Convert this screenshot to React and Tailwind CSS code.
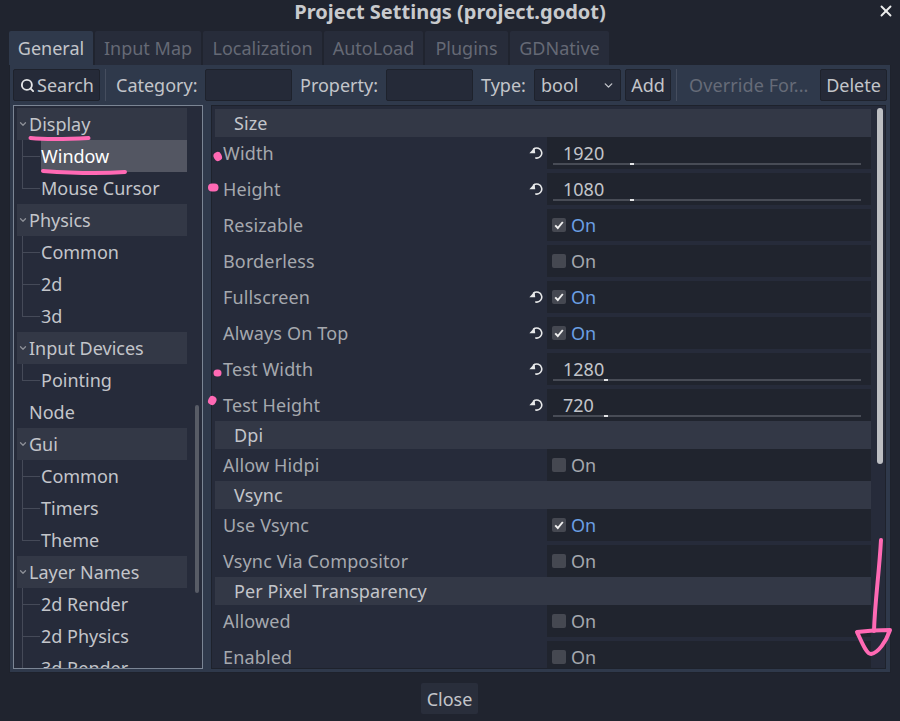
import { Search, ChevronDown, X } from 'lucide-react';

const TABS = ['Input Map', 'Localization', 'AutoLoad', 'Plugins', 'GDNative'];

const TREE = [
  { label: 'Display', head: true },
  { label: 'Window', sel: true },
  { label: 'Mouse Cursor', last: true },
  { label: 'Physics', head: true },
  { label: 'Common' },
  { label: '2d' },
  { label: '3d', last: true },
  { label: 'Input Devices', head: true },
  { label: 'Pointing', last: true },
  { label: 'Node', plain: true },
  { label: 'Gui', head: true },
  { label: 'Common' },
  { label: 'Timers' },
  { label: 'Theme', last: true },
  { label: 'Layer Names', head: true },
  { label: '2d Render' },
  { label: '2d Physics' },
  { label: '3d Render' },
];

const PROPS = [
  { section: 'Size' },
  { label: 'Width', value: '1920', grab: 77, reset: true },
  { label: 'Height', value: '1080', grab: 77, reset: true },
  { label: 'Resizable', on: true },
  { label: 'Borderless', on: false },
  { label: 'Fullscreen', on: true, reset: true },
  { label: 'Always On Top', on: true, reset: true },
  { label: 'Test Width', value: '1280', grab: 51, reset: true },
  { label: 'Test Height', value: '720', grab: 51, reset: true, noGap: true },
  { section: 'Dpi' },
  { label: 'Allow Hidpi', on: false, noGap: true },
  { section: 'Vsync' },
  { label: 'Use Vsync', on: true },
  { label: 'Vsync Via Compositor', on: false, noGap: true },
  { section: 'Per Pixel Transparency' },
  { label: 'Allowed', on: false },
  { label: 'Enabled', on: false },
];

function TreeRow({ item }) {
  if (item.head) {
    return (
      <div className="h-8 w-[170px] bg-[#333846] flex items-center text-[#c3c5ca] shrink-0">
        <ChevronDown size={10} strokeWidth={3} className="ml-[1px] mr-[1px] text-[#8d9098]" />
        <span>{item.label}</span>
      </div>
    );
  }
  if (item.plain) {
    return <div className="h-8 w-[170px] flex items-center pl-3 text-[#c3c5ca] shrink-0">{item.label}</div>;
  }
  return (
    <div className="relative h-8 w-[170px] flex shrink-0">
      <span className={'absolute left-[5px] top-0 w-px bg-[#454a58] ' + (item.last ? 'h-4' : 'h-8')} />
      <span className="absolute left-[5px] top-4 w-[18px] h-px bg-[#454a58]" />
      <div className={'ml-6 flex-1 flex items-center ' + (item.sel ? 'bg-[#535662] text-white' : 'text-[#c3c5ca]')}>
        {item.label}
      </div>
    </div>
  );
}

function ResetIcon() {
  return (
    <svg width="14" height="14" viewBox="0 0 14 14" fill="none" className="text-[#e8e9ea]">
      <path d="M4.6 3.2 A5 5 0 1 1 6.8 12" stroke="currentColor" strokeWidth="1.6" strokeLinecap="round" />
      <path d="M0.4 7.2 L6.2 7.2 L5.6 1.6 Z" fill="currentColor" />
    </svg>
  );
}

function Prop({ p }) {
  if (p.section) {
    return (
      <div className="h-7 w-[656px] bg-[#333846] flex items-center pl-[19px] text-[#c3c5ca] tracking-[0.1px] shrink-0">{p.section}</div>
    );
  }
  return (
    <div className={'flex h-8 shrink-0 ' + (p.noGap ? '' : 'mb-1')}>
      <div className="w-[332px] pl-2 pr-1 flex items-center justify-between text-[#a5a8ae] tracking-[0.15px]">
        <span>{p.label}</span>
        {p.reset && <ResetIcon />}
      </div>
      <div className="w-[324px] bg-[#20242e] relative flex items-center">
        {p.value ? (
          <>
            <span className="ml-4 text-[#c3c5ca]">{p.value}</span>
            <div className="absolute left-[6px] right-[10px] bottom-1 h-0.5 bg-[#484c56]" />
            <div className="absolute bottom-1 h-0.5 w-1 bg-[#e2e3e5]" style={{ left: p.grab + 6 }} />
          </>
        ) : (
          <>
            <span className="ml-[5px] w-[14px] h-[14px] rounded-[2px] bg-[#454851] flex items-center justify-center">
              {p.on && (
                <svg width="10" height="10" viewBox="0 0 10 10" fill="none">
                  <path d="M1.2 5.4 L3.8 8 L8.8 2" stroke="#f0f0f0" strokeWidth="1.9" />
                </svg>
              )}
            </span>
            <span className={'ml-[5px] ' + (p.on ? 'text-[#6b9fe4]' : 'text-[#a5a8ae]')}>On</span>
          </>
        )}
      </div>
    </div>
  );
}

function Btn({ className, children }) {
  return (
    <div className={'h-8 bg-[#252a38] border border-[#1e222c] rounded-[2px] flex items-center shrink-0 text-[#c3c5ca] ' + className}>
      {children}
    </div>
  );
}

export default function App() {
  return (
    <div className="relative w-[900px] h-[721px] bg-[#20242f] overflow-hidden text-[18px] leading-6" style={{ fontFamily: '"Noto Sans", sans-serif' }}>
      <div className="h-[31px] relative flex items-center justify-center pb-2 font-bold text-[20px] leading-5 text-[#c8cacd]">
        Project Settings (project.godot)
        <X size={18} strokeWidth={2.5} className="absolute right-[5px] top-[2px] text-[#eceded]" />
      </div>

      {/* tabs */}
      <div className="ml-[9px] flex gap-0.5 h-[34px]">
        <div className="w-[84px] bg-[#2f394b] rounded-t-[2px] flex items-center justify-center text-[#c3c5ca]">General</div>
        {TABS.map((t, i) => (
          <div key={t} className={'bg-[#272c3a] rounded-t-[2px] flex items-center justify-center text-[#656975] ' + ['w-[106px]', 'w-[119px]', 'w-[99px]', 'w-[83px]', 'w-[99px]'][i]}>
            {t}
          </div>
        ))}
      </div>

      <div className="mx-[9px] w-[882px] h-[608px] bg-[#2f394b] border border-[#1e222c] border-t-0 p-1 flex flex-col">
        {/* toolbar */}
        <div className="flex items-center h-8 -ml-px -mr-px">
          <Btn className="w-[87px] pl-[6px]">
            <Search size={15} strokeWidth={3} className="mr-[2px] text-[#e4e5e7]" />
            Search
          </Btn>
          <span className="w-px h-8 bg-[#454d5e] ml-[5px]" />
          <span className="ml-[10px] w-[89px] text-[#c3c5ca]">Category:</span>
          <Btn className="w-[87px]" />
          <span className="ml-2 w-[86px] text-[#c3c5ca]">Property:</span>
          <Btn className="w-[87px]" />
          <span className="ml-2 w-[53px] text-[#c3c5ca]">Type:</span>
          <Btn className="w-[87px] pl-[6px] justify-between pr-[5px]">
            bool
            <ChevronDown size={13} strokeWidth={2.5} className="text-[#c3c5ca]" />
          </Btn>
          <Btn className="ml-1 w-[46px] justify-center">Add</Btn>
          <span className="w-px h-8 bg-[#454d5e] ml-[5px]" />
          <span className="ml-[12px] w-[131px] text-[#666b78] tracking-[0.1px]">Override For...</span>
          <Btn className="w-[67px] justify-center">Delete</Btn>
        </div>

        <div className="flex mt-1 h-[564px] -ml-px">
          {/* tree */}
          <div className="relative w-[190px] border border-[#7b8594] bg-[#262b3a] overflow-hidden pl-[3px] pt-[2px] flex flex-col shrink-0">
            {TREE.map((t, i) => <TreeRow key={i} item={t} />)}
            <div className="absolute left-[181px] top-[299px] w-1 h-[188px] rounded-sm bg-[#585c66]" />
          </div>
          {/* props */}
          <div className="relative ml-2 w-[676px] bg-[#262b3a] border border-[#1e222c] overflow-hidden pl-[3px] pt-[3px] flex flex-col">
            {PROPS.map((p, i) => <Prop key={i} p={p} />)}
            <div className="absolute right-[2px] top-[2px] w-[6px] h-[356px] rounded-sm bg-[#bdbfc3]" />
          </div>
        </div>
      </div>

      <div className="mt-[10px] flex justify-center">
        <div className="w-[57px] h-[31px] -ml-[1px] rounded-[2px] bg-[#292e3b] flex items-center justify-center text-[#c3c5ca]">Close</div>
      </div>

      {/* hand drawn annotations */}
      <svg className="absolute inset-0 pointer-events-none" width="900" height="721" viewBox="0 0 900 721" fill="none" stroke="#ff69b4" strokeLinecap="round" strokeLinejoin="round">
        <path d="M30.5 138 C50 140 70 139 88.5 138" strokeWidth="4" />
        <path d="M43 171 C70 173 100 174 125 172" strokeWidth="4" />
        <path d="M217.5 156 L218 157" strokeWidth="8" />
        <path d="M212 187.5 L214.5 187.5" strokeWidth="8" />
        <path d="M217 373 L218 373" strokeWidth="7" />
        <path d="M212 401 L212.5 400" strokeWidth="8" />
        <path d="M881 540 C879 575 875 600 874 631" strokeWidth="4" />
        <path d="M857 632 C865 631 880 630 890 630 C886 642 878 653 871 654 C866 654 861 640 857 632 Z" strokeWidth="4" />
      </svg>
    </div>
  );
}
